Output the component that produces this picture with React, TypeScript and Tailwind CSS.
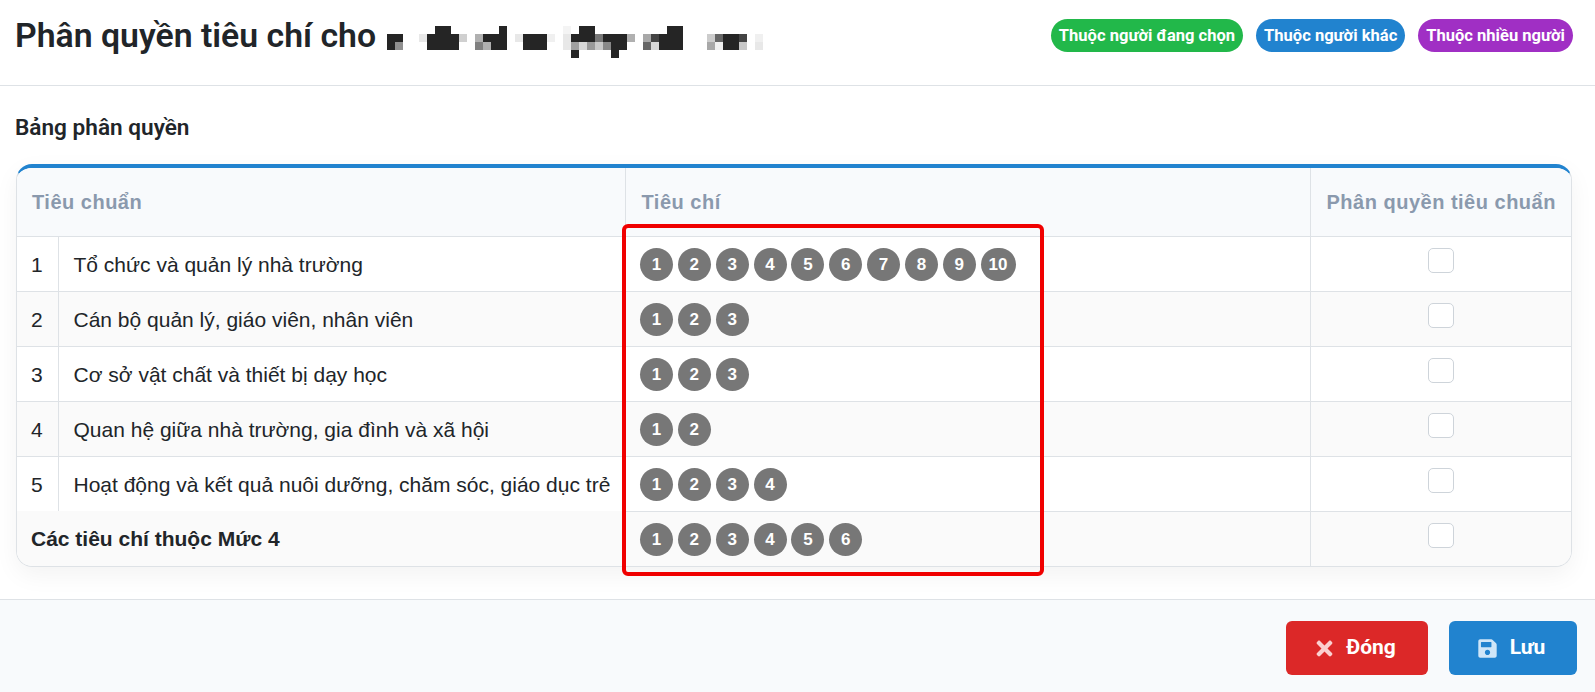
import { FaSave, FaTimes } from "react-icons/fa";

const rows = [
  { no: 1, name: "Tổ chức và quản lý nhà trường", count: 10 },
  { no: 2, name: "Cán bộ quản lý, giáo viên, nhân viên", count: 3 },
  { no: 3, name: "Cơ sở vật chất và thiết bị dạy học", count: 3 },
  { no: 4, name: "Quan hệ giữa nhà trường, gia đình và xã hội", count: 2 },
  { no: 5, name: "Hoạt động và kết quả nuôi dưỡng, chăm sóc, giáo dục trẻ", count: 4 },
];

// the blurred-out person name: [column, row, column span, colour] on an 8px grid
const D = "#252525";
const mosaic: [number, number, number, string][] = [
  [6, 0, 2, D], [14, 0, 1, D], [22, 0, 1, "#f4f4f4"], [24, 0, 2, D], [35, 0, 2, D],
  [0, 1, 2, D], [4, 1, 1, "#e8e8e8"], [5, 1, 4, D], [9, 1, 1, "#d0d0d0"], [11, 1, 1, "#b0b0b0"],
  [12, 1, 3, D], [16, 1, 1, "#e8e8e8"], [17, 1, 3, D], [20, 1, 1, "#f0f0f0"], [22, 1, 1, "#e8e8e8"],
  [23, 1, 3, D], [26, 1, 1, "#777777"], [27, 1, 3, D], [30, 1, 1, "#b0b0b0"], [32, 1, 1, "#a8a8a8"],
  [33, 1, 1, "#444444"], [34, 1, 3, D], [40, 1, 1, "#cccccc"], [41, 1, 1, "#666666"], [42, 1, 2, D],
  [44, 1, 1, "#444444"], [46, 1, 1, "#f0f0f0"],
  [0, 2, 1, D], [1, 2, 1, "#909090"], [5, 2, 4, D], [11, 2, 1, "#808080"], [12, 2, 1, "#b0b0b0"],
  [13, 2, 2, D], [17, 2, 3, D], [22, 2, 1, "#e8e8e8"], [23, 2, 1, "#a0a0a0"], [24, 2, 1, "#d8d8d8"],
  [25, 2, 1, "#999999"], [26, 2, 1, "#c8c8c8"], [27, 2, 1, "#888888"], [28, 2, 2, D], [32, 2, 1, "#666666"],
  [33, 2, 1, "#d8d8d8"], [34, 2, 3, D], [40, 2, 1, "#a8a8a8"], [41, 2, 1, "#f0f0f0"], [42, 2, 2, D],
  [44, 2, 1, "#c8c8c8"], [46, 2, 1, "#e8e8e8"],
  [23, 3, 1, D], [28, 3, 1, D],
];

function RedactedName() {
  return (
    <svg width={376} height={32} shapeRendering="crispEdges" className="mt-[26px] ml-[11px] shrink-0">
      {mosaic.map(([col, row, span, fill]) => (
        <rect key={`${col}-${row}`} x={col * 8} y={row * 8} width={span * 8} height={8} fill={fill} />
      ))}
    </svg>
  );
}

function Circles({ count }: { count: number }) {
  return (
    <div className="flex gap-[4.85px] pt-[2px]">
      {Array.from({ length: count }, (_, i) => (
        <span
          key={i}
          className="flex h-[33px] min-w-[33px] items-center justify-center rounded-full bg-[#777777] px-2 text-[17px] font-bold text-white"
        >
          {i + 1}
        </span>
      ))}
    </div>
  );
}

function Pill({ label, color }: { label: string; color: string }) {
  return (
    <span
      className={`flex h-[33px] items-center rounded-full px-2 pt-[1px] font-['Roboto',sans-serif] text-[16.55px] font-bold text-white ${color}`}
    >
      {label}
    </span>
  );
}

function Checkbox() {
  return <div className="mx-auto mb-[6px] h-[25px] w-[26px] rounded-[5px] border border-[#ced4da] bg-white" />;
}

export default function App() {
  return (
    <div className="relative flex h-[692px] flex-col bg-white font-['Liberation_Sans',sans-serif] text-[#212529]">
      <header className="flex h-[86px] items-start justify-between border-b border-[#dee2e6] pr-[22px] pl-[15px]">
        <div className="flex items-start">
          <h1 className="mt-[13px] font-['Roboto',sans-serif] text-[33.8px] leading-[46px] font-semibold">
            Phân quyền tiêu chí cho
          </h1>
          <RedactedName />
        </div>
        <div className="mt-[19px] flex gap-[13px]">
          <Pill label="Thuộc người đang chọn" color="bg-[#22b84a]" />
          <Pill label="Thuộc người khác" color="bg-[#2183cf]" />
          <Pill label="Thuộc nhiều người" color="bg-[#a02fc4]" />
        </div>
      </header>

      <main className="h-[513px] pr-[23px] pl-[16px]">
        <h2 className="mt-[28px] mb-[23px] -ml-[1px] font-['Roboto',sans-serif] text-[22.6px] leading-[27px] font-semibold">
          Bảng phân quyền
        </h2>
        <div className="overflow-hidden rounded-[16px] border border-t-4 border-[#dee2e6] border-t-[#2183cf] shadow-[0_8px_24px_rgba(0,0,0,0.05)]">
          <table className="w-full table-fixed border-collapse text-[21px]">
            <colgroup>
              <col className="w-[41px]" />
              <col className="w-[567px]" />
              <col className="w-[685px]" />
              <col />
            </colgroup>
            <thead>
              <tr className="h-[68px] bg-[#f8fafc] text-left text-[20px] font-bold tracking-[0.5px] whitespace-nowrap text-[#8a99ad]">
                <th colSpan={2} className="px-[15px]">Tiêu chuẩn</th>
                <th className="border-l border-[#dee2e6] px-[16px]">Tiêu chí</th>
                <th className="border-l border-[#dee2e6] px-[16px]">Phân quyền tiêu chuẩn</th>
              </tr>
            </thead>
            <tbody>
              {rows.map((row) => (
                <tr key={row.no} className="h-[55px] border-t border-[#dee2e6] even:bg-[#fafafa]">
                  <td className="border-r border-[#dee2e6] px-[14px] pt-[2px]">{row.no}</td>
                  <td className="px-[15px] pt-[2px] whitespace-nowrap">{row.name}</td>
                  <td className="border-l border-[#dee2e6] px-[14.5px]"><Circles count={row.count} /></td>
                  <td className="border-l border-[#dee2e6]"><Checkbox /></td>
                </tr>
              ))}
              <tr className="h-[55px] bg-[#fafafa]">
                <td colSpan={2} className="px-[14px] font-bold">Các tiêu chí thuộc Mức 4</td>
                <td className="border-t border-l border-[#dee2e6] px-[14.5px]"><Circles count={6} /></td>
                <td className="border-t border-l border-[#dee2e6]"><Checkbox /></td>
              </tr>
            </tbody>
          </table>
        </div>
      </main>

      <footer className="flex flex-1 items-start justify-end gap-[21px] border-t border-[#dee2e6] bg-[#f8fafc] pt-[21px] pr-[18px]">
        <button type="button" className="flex h-[54px] w-[142px] items-center justify-center gap-[10px] rounded-[6px] bg-[#dc2828] pr-[5px] font-['Roboto',sans-serif] text-[21px] font-bold text-white">
          <FaTimes size={23} className="text-[#fbd0d0]" />
          Đóng
        </button>
        <button type="button" className="flex h-[54px] w-[128px] items-center justify-center gap-3 rounded-[6px] bg-[#2183cf] pr-[4px] font-['Roboto',sans-serif] text-[21px] font-bold text-white">
          <FaSave size={21} className="text-[#cfe6f8]" />
          Lưu
        </button>
      </footer>

      <div className="absolute top-[224px] left-[622px] h-[352px] w-[422px] rounded-[6px] border-4 border-[#f00000]" />
    </div>
  );
}
